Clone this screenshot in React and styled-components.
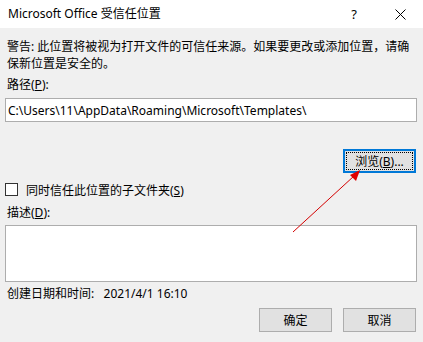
import React from "react";
import styled, { createGlobalStyle } from "styled-components";

const GlobalStyle = createGlobalStyle`
    html, body {
        margin: 0;
        padding: 0;
        background: #f0f0f0;
    }
    * {
        box-sizing: border-box;
    }
`;

const Window = styled.div`
    position: relative;
    width: 423px;
    height: 342px;
    overflow: hidden;
    background: #f0f0f0;
    font-family: "Noto Sans", "Noto Sans CJK SC", sans-serif;
    font-size: 12px;
    color: #000;
    display: flex;
    flex-direction: column;
`;

const TitleBar = styled.div`
    height: 28px;
    background: #fff;
    display: flex;
    align-items: center;
    padding-left: 8px;
    flex-shrink: 0;
`;

const Title = styled.div`
    flex: 1;
    font-size: 12px;
    line-height: 16px;
`;

const CaptionButton = styled.div`
    width: 46px;
    height: 28px;
    display: flex;
    align-items: center;
    justify-content: center;
    font-size: 13px;
`;

const Body = styled.div`
    flex: 1;
    display: flex;
    flex-direction: column;
    padding: 10px 6px 0 5px;
`;

const Text = styled.div`
    line-height: 17px;
    height: 17px;
    padding-left: ${({indent}) => indent ? "2px" : "0"};
    margin-top: ${({top}) => top || 0}px;
    white-space: nowrap;
`;

const Field = styled.div`
    margin-top: ${({top}) => top || 0}px;
    height: ${({h}) => h}px;
    background: #fff;
    border: 1px solid #adadad;
    padding: 0 2px;
    display: flex;
    align-items: ${({multi}) => multi ? "flex-start" : "center"};
    line-height: 17px;
`;

const BrowseRow = styled.div`
    margin-top: 27px;
    display: flex;
    justify-content: flex-end;
    padding-right: 1px;
`;

const Button = styled.div`
    width: 73px;
    height: 24px;
    background: #e1e1e1;
    border: ${({focused}) => focused ? "2px solid #0078d7" : "1px solid #adadad"};
    display: flex;
    align-items: center;
    justify-content: center;
    padding: ${({focused}) => focused ? "1px" : "0"};
`;

const FocusRect = styled.div`
    flex: 1;
    align-self: stretch;
    border: 1px dotted #000;
    display: flex;
    align-items: center;
    justify-content: center;
`;

const CheckRow = styled.div`
    margin-top: 8px;
    height: 17px;
    display: flex;
    align-items: center;
    gap: 8px;
`;

const CheckBox = styled.div`
    width: 13px;
    height: 13px;
    border: 1px solid #333;
    background: #fff;
`;

const Footer = styled.div`
    margin-top: 6px;
    display: flex;
    justify-content: flex-end;
    gap: 11px;
    padding-right: 1px;
`;

const Key = styled.span`
    text-decoration: underline;
    text-underline-offset: 1px;
`;

const Arrow = styled.svg`
    position: absolute;
    left: 0;
    top: 0;
    pointer-events: none;
`;

const App = () => {
    return (
        <>
            <GlobalStyle />
            <Window>
                <TitleBar>
                    <Title>Microsoft Office 受信任位置</Title>
                    <CaptionButton>?</CaptionButton>
                    <CaptionButton>
                        <svg width="11" height="11" viewBox="0 0 11 11">
                            <path d="M0.5 0.5 L10.5 10.5 M10.5 0.5 L0.5 10.5" stroke="#000" strokeWidth="1" fill="none" />
                        </svg>
                    </CaptionButton>
                </TitleBar>
                <Body>
                    <Text indent>警告: 此位置将被视为打开文件的可信任来源。如果要更改或添加位置，请确</Text>
                    <Text indent>保新位置是安全的。</Text>
                    <Text indent top={4}>路径(<Key>P</Key>):</Text>
                    <Field top={5} h={24}>C:\Users\11\AppData\Roaming\Microsoft\Templates\</Field>
                    <BrowseRow>
                        <Button focused>
                            <FocusRect>浏览(<Key>B</Key>)...</FocusRect>
                        </Button>
                    </BrowseRow>
                    <CheckRow>
                        <CheckBox />
                        <span>同时信任此位置的子文件夹(<Key>S</Key>)</span>
                    </CheckRow>
                    <Text indent top={6}>描述(<Key>D</Key>):</Text>
                    <Field top={4} h={57} multi />
                    <Text indent top={3}>创建日期和时间:&nbsp;&nbsp;&nbsp;2021/4/1 16:10</Text>
                    <Footer>
                        <Button>确定</Button>
                        <Button>取消</Button>
                    </Footer>
                </Body>
                <Arrow width="423" height="342">
                    <line x1="293" y1="232" x2="354" y2="176" stroke="#d40000" strokeWidth="1" />
                    <polygon points="360,170 350,175 356,181" fill="#e00000" />
                </Arrow>
            </Window>
        </>
    );
};

export default App;
